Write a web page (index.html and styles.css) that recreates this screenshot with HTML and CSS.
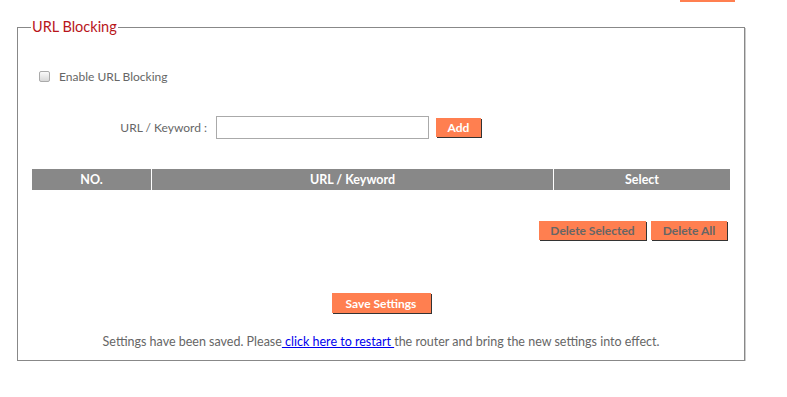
FILE: index.html
```html
<!DOCTYPE html>
<html lang="en">
<head>
    <meta charset="UTF-8">
    <title>URL Blocking</title>
    <link rel="stylesheet" href="styles.css">
</head>
<body>
    <div class="top-strip"></div>
    <div class="page">
        <fieldset class="box">
            <legend>URL Blocking</legend>
            <label class="enable"><input type="checkbox" class="check"> Enable URL Blocking</label>
            <div class="entry">
                <span class="entry-label">URL / Keyword :</span>
                <input type="text" class="entry-input">
                <button class="btn btn-add">Add</button>
            </div>
            <table class="list">
                <tr>
                    <th class="col-no">NO.</th>
                    <th class="col-url">URL / Keyword</th>
                    <th class="col-sel">Select</th>
                </tr>
            </table>
            <div class="actions">
                <button class="btn btn-off btn-del-sel">Delete Selected</button>
                <button class="btn btn-off btn-del-all">Delete All</button>
            </div>
            <div class="save">
                <button class="btn btn-save">Save Settings</button>
            </div>
            <p class="note">Settings have been saved. Please<a href="#"> click here to restart </a>the router and bring the new settings into effect.</p>
        </fieldset>
    </div>
</body>
</html>
```

FILE: styles.css
```css
body {
    margin: 0;
    font-family: Lato, "Open Sans", sans-serif;
    font-size: 12px;
    color: #666;
    background: #fff;
}

.top-strip {
    width: 55px;
    height: 2px;
    margin-left: 680px;
    background: #ff7f50;
}

.page {
    padding: 16px 0 0 17px;
}

.box {
    box-sizing: border-box;
    width: 728px;
    height: 343px;
    margin: 0;
    padding: 0 14px;
    border: 1px solid #888;
    box-shadow: 1px 1px 0 #ccc;
}

.box legend {
    padding: 0 1px;
    margin-left: -1px;
    font-size: 14.5px;
    line-height: 18px;
    color: #b8151b;
}

.enable {
    display: flex;
    align-items: center;
    margin: 33px 0 0 7px;
}

.check {
    appearance: none;
    width: 11px;
    height: 11px;
    margin: 0 9px 0 0;
    border: 1px solid #aaa;
    border-radius: 2px;
    background: linear-gradient(#fafafa, #d8d8d8);
}

.entry {
    display: flex;
    align-items: center;
    margin-top: 32px;
}

.entry-label {
    width: 175px;
    text-align: right;
}

.entry-input {
    box-sizing: border-box;
    width: 213px;
    height: 23px;
    margin-left: 9px;
    border: 1px solid #aaa;
}

.btn {
    font-family: Lato, "Open Sans", sans-serif;
    font-size: 12px;
    font-weight: bold;
    height: 19px;
    padding: 0;
    border: none;
    background: #ff7f50;
    box-shadow: 1px 1px 0 #333;
    cursor: pointer;
}

.btn-add {
    width: 45px;
    margin-left: 7px;
    color: #fff;
}

.list {
    width: 698px;
    margin-top: 30px;
    border-collapse: collapse;
}

.list th {
    height: 21px;
    padding: 0;
    background: #888;
    color: #fff;
    font-size: 12.5px;
    font-weight: bold;
}

.col-no {
    width: 119px;
    border-right: 1px solid #fff;
}

.col-url {
    width: 401px;
    border-right: 1px solid #fff;
}

.actions {
    display: flex;
    justify-content: flex-end;
    gap: 5px;
    margin: 31px 3px 0 0;
}

.btn-off {
    color: #666;
}

.btn-del-sel {
    width: 107px;
}

.btn-del-all {
    width: 76px;
}

.save {
    display: flex;
    justify-content: center;
    margin-top: 53px;
}

.btn-save {
    width: 99px;
    height: 20px;
    color: #fff;
}

.note {
    margin: 21px 0 0;
    font-size: 12.5px;
    text-align: center;
}

.note a {
    color: #00e;
}
```
